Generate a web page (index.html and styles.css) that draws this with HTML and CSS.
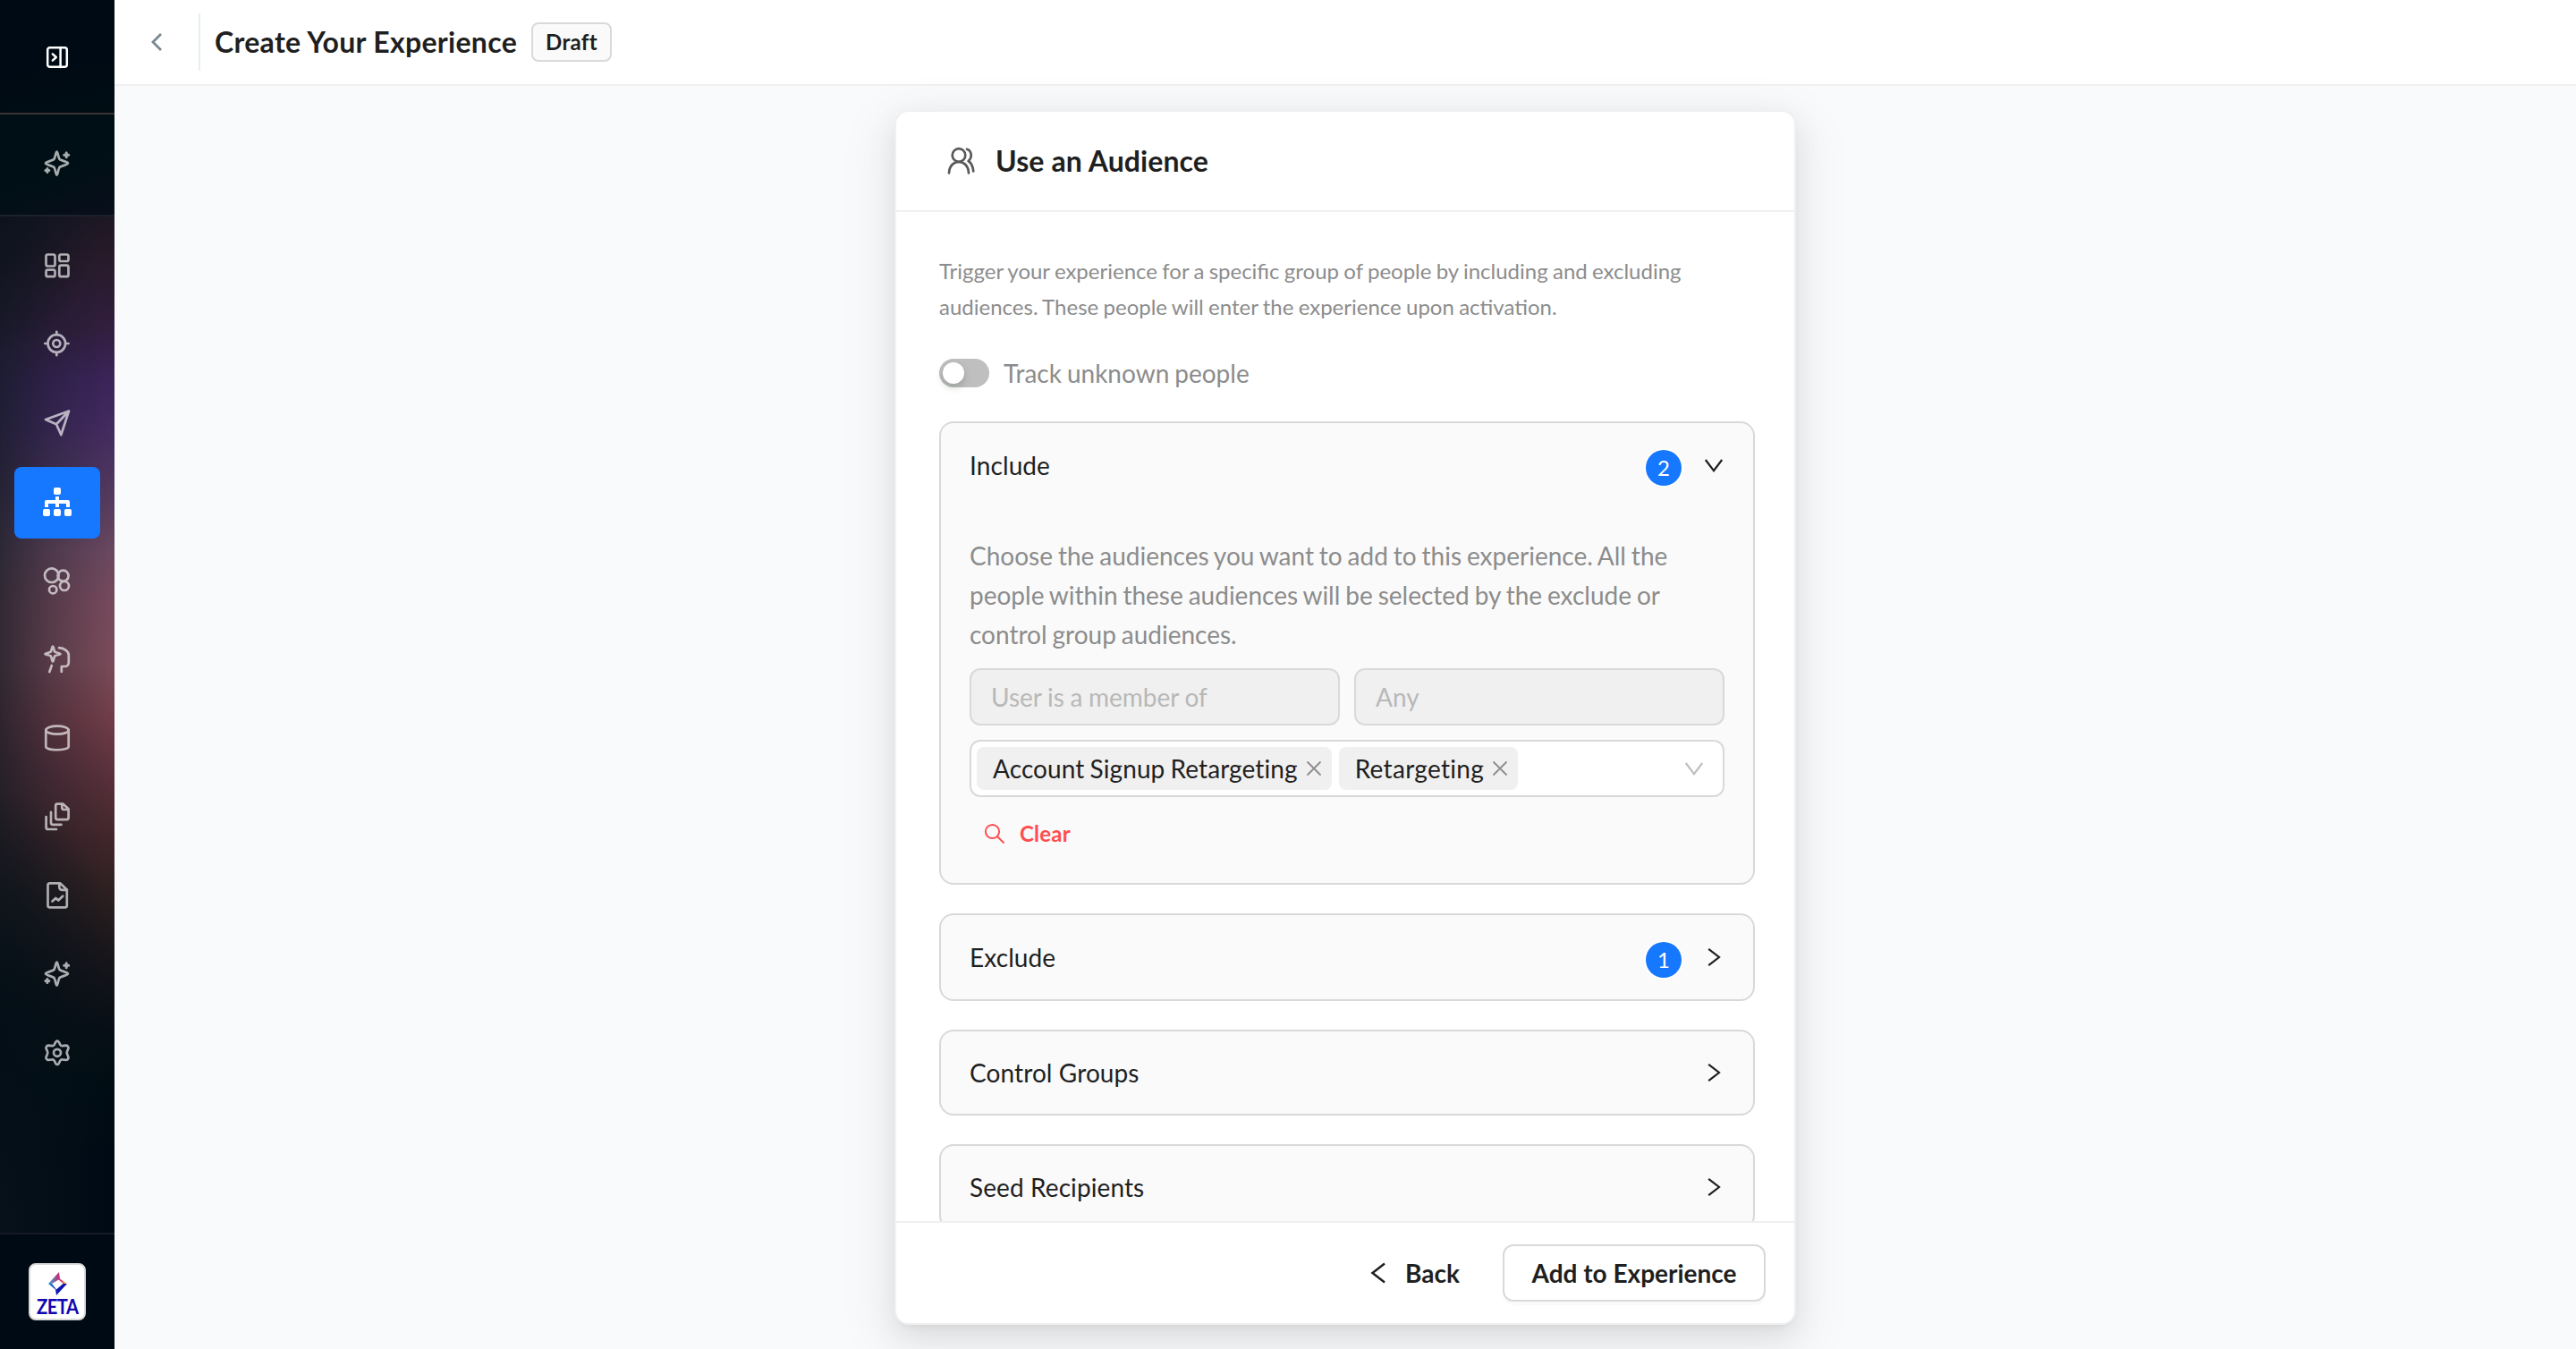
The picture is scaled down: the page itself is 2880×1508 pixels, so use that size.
FILE: index.html
```html
<!DOCTYPE html>
<html lang="en">
<head>
<meta charset="utf-8">
<title>Create Your Experience</title>
<link rel="stylesheet" href="styles.css">
</head>
<body>
<svg class="defs" width="0" height="0" aria-hidden="true">
  <symbol id="sparkle" viewBox="0 0 32 32">
    <path d="M15.500 2.500c1 0 1.300 5 3 8.500 3.500 2 9.500 3 9.500 4.500s-6 2.500-9.500 4.500c-1.700 3.500-2 8.500-3 8.500s-1.300-5-3-8.500C9 18 3 17 3 15.500s6-2.500 9.500-4.500c1.700-3.500 2-8.500 3-8.500z"/>
    <path d="M26.200 3.800v5M23.700 6.300h5M4.900 21.500v4M2.900 23.500h4" stroke-width="3"/>
  </symbol>
  <symbol id="down" viewBox="0 0 24 24"><path d="M2.800 6L12 18.200 21.200 6"/></symbol>
  <symbol id="right" viewBox="0 0 24 24"><path d="M6.200 2.800L18 12 6.200 21.200"/></symbol>
  <symbol id="close" viewBox="0 0 20 20"><path d="M3 3l14 14M17 3L3 17"/></symbol>
</svg>
<div class="app">
  <aside class="sidebar">
    <div class="side-toggle">
      <svg class="ico bright" viewBox="0 0 32 32"><rect x="5.200" y="5.200" width="21.600" height="21.600" rx="2.500"/><path d="M19.600 5v22M10.800 12.300l4 3.700-4 3.700"/></svg>
    </div>
    <div class="side-ai"><svg class="ico"><use href="#sparkle"/></svg></div>
    <nav class="side-nav">
      <a class="nav-item"><svg class="ico" viewBox="0 0 32 32"><rect x="3.500" y="3.500" width="10" height="13" rx="2"/><rect x="18.300" y="3.500" width="10.200" height="7.500" rx="2"/><rect x="3.500" y="20.700" width="10" height="7.500" rx="2"/><rect x="18.300" y="15.700" width="10.200" height="12.500" rx="2"/></svg></a>
      <a class="nav-item"><svg class="ico" viewBox="0 0 32 32"><circle cx="15.300" cy="15" r="9.800"/><circle cx="15.300" cy="15" r="4"/><path d="M15.300 1.800V5M15.300 25v3.200M2.200 15h3M25.500 15h3"/></svg></a>
      <a class="nav-item"><svg class="ico" viewBox="0 0 32 32"><path d="M29 2.500L3 12l12 5.200L20.300 29z M29 2.500L15 17.200"/></svg></a>
      <a class="nav-item active"><svg class="ico solid" viewBox="0 0 32 32"><rect x="12" y="0" width="8" height="8" rx="2"/><rect x="0" y="24" width="8" height="8" rx="2"/><rect x="12" y="24" width="8" height="8" rx="2"/><rect x="24" y="24" width="8" height="8" rx="2"/><path d="M14 10h4v4h10a2 2 0 0 1 2 2v6h-4v-4h-8v4h-4v-4H6v4H2v-6a2 2 0 0 1 2-2h10z"/></svg></a>
      <a class="nav-item"><svg class="ico" viewBox="0 0 32 32"><circle cx="9.800" cy="10.200" r="7.800"/><circle cx="22.600" cy="10.700" r="6"/><circle cx="24" cy="22" r="5"/><circle cx="11.200" cy="26.200" r="4.200"/></svg></a>
      <a class="nav-item"><svg class="ico" viewBox="0 0 32 32"><path d="M11 1.500c.9 0 1 4 2.300 6.200 2.200 1.300 6.200 1.400 6.200 2.300s-4 1-6.200 2.300C12 14.500 11.900 18.500 11 18.500s-1-4-2.300-6.200C6.500 11 2.500 10.900 2.500 10s4-1 6.200-2.300C10 5.500 10.100 1.500 11 1.500zM18 3.200c6 .3 10.800 4 10.800 8v8.500c0 2.500-2 4.300-4.300 4.300H20.800v6M9.800 23L7.300 30"/></svg></a>
      <a class="nav-item"><svg class="ico" viewBox="0 0 32 32"><ellipse cx="16" cy="7.200" rx="12.700" ry="4.500"/><path d="M3.300 7.200v18.300c0 5 25.400 5 25.400 0V7.200"/></svg></a>
      <a class="nav-item"><svg class="ico" viewBox="0 0 32 32"><path d="M16.200 1.700h6.300l6.100 5.600v9.800a2 2 0 0 1-2 2H16.200a2 2 0 0 1-2-2V3.700a2 2 0 0 1 2-2zM21.300 1.700v4a2.300 2.300 0 0 0 2.300 2.300h4.700M9 10.800v12a2 2 0 0 0 2 2h9.500M3.600 16v12a2 2 0 0 0 2 2H15"/></svg></a>
      <a class="nav-item"><svg class="ico" viewBox="0 0 32 32"><path d="M7.500 2.300h11.600l7.700 7.200V27.300a2 2 0 0 1-2 2H7.500a2 2 0 0 1-2-2V4.300a2 2 0 0 1 2-2zM18.300 2.300v4.500a3 3 0 0 0 3 3H27M10.500 22.500l3.800-3.500 2.900 2.500 5-4.800"/></svg></a>
      <a class="nav-item"><svg class="ico"><use href="#sparkle"/></svg></a>
      <a class="nav-item"><svg class="ico" viewBox="0 0 32 32"><circle cx="16" cy="15.800" r="4"/><path transform="translate(0 .6)" d="M14.200 3.300q1.800-2.600 3.600 0l1.500 3q.8 1.400 2.600 1.200l3.600-.4q3.200.1 3 3.200l-1.400 3.200q-.7 1.700 0 3.400l1.400 3.200q.2 3.100-3 3.200l-3.600-.4q-1.800-.2-2.600 1.200l-1.500 3q-1.800 2.600-3.600 0l-1.500-3q-.8-1.400-2.600-1.200l-3.600.4q-3.200-.1-3-3.200l1.400-3.200q.7-1.700 0-3.400L3.500 10.300q-.2-3.100 3-3.200l3.600.4q1.800.2 2.600-1.200z"/></svg></a>
    </nav>
    <div class="side-brand">
      <div class="brand">
        <svg class="brand-mark" viewBox="0 0 21 26">
          <defs>
            <linearGradient id="top" x1="0" y1="0" x2="1" y2="0"><stop offset="0" stop-color="#35a8e0"/><stop offset=".55" stop-color="#c0307a"/><stop offset=".72" stop-color="#e0506a"/><stop offset="1" stop-color="#ffe45a"/></linearGradient>
            <linearGradient id="bottom" x1="0" y1="0" x2="1" y2="0"><stop offset="0" stop-color="#1a9ae0"/><stop offset=".45" stop-color="#0a18b8"/><stop offset="1" stop-color="#1208b0"/></linearGradient>
          </defs>
          <path fill="url(#top)" d="M0 13L12 0l1 7.500L21 13h-4.500l-5-4.500L4 13z"/>
          <path fill="url(#bottom)" d="M0 13h4l5 6.500L16.500 13H21L9 26 8 19.500z"/>
        </svg>
        <span class="brand-name">ZETA</span>
      </div>
    </div>
  </aside>

  <div class="main">
    <header class="topbar">
      <div class="back-link"><svg viewBox="0 0 16 24"><path d="M13 3L4 12l9 9"/></svg></div>
      <h1 class="page-title">Create Your Experience</h1>
      <span class="status">Draft</span>
    </header>

    <main class="canvas">
      <section class="card">
        <div class="card-head">
          <svg class="people" viewBox="0 0 32 32"><circle cx="13" cy="9.500" r="7.300"/><path d="M2 29.500C2.300 21.500 7 17 13 17s10.700 4.500 11 12.500M22 2.800c6 2 6 9.600 1.600 13.200 3.400 2 5.100 6 5.700 11.500"/></svg>
          <h2 class="card-title">Use an Audience</h2>
        </div>
        <div class="card-body">
          <p class="intro">Trigger your experience for a specific group of people by including and excluding audiences. These people will enter the experience upon activation.</p>
          <div class="track"><span class="switch"><span class="knob"></span></span><span>Track unknown people</span></div>
          <div class="panels">
            <div class="panel">
              <div class="panel-head counted"><span class="panel-name">Include</span><span class="count">2</span><svg class="chev"><use href="#down"/></svg></div>
              <div class="panel-body">
                <p class="hint">Choose the audiences you want to add to this experience. All the people within these audiences will be selected by the exclude or control group audiences.</p>
                <div class="field-row"><div class="field">User is a member of</div><div class="field">Any</div></div>
                <div class="select">
                  <span class="tag">Account Signup Retargeting<svg class="x"><use href="#close"/></svg></span>
                  <span class="tag">Retargeting<svg class="x"><use href="#close"/></svg></span>
                  <svg class="chev faint"><use href="#down"/></svg>
                </div>
                <div class="clear"><svg viewBox="0 0 24 24"><circle cx="9.500" cy="9.500" r="7.600"/><path d="M15 15l7.500 7.500"/></svg><span>Clear</span></div>
              </div>
            </div>
            <div class="panel"><div class="panel-head counted"><span class="panel-name">Exclude</span><span class="count">1</span><svg class="chev"><use href="#right"/></svg></div></div>
            <div class="panel"><div class="panel-head"><span class="panel-name">Control Groups</span><svg class="chev"><use href="#right"/></svg></div></div>
            <div class="panel"><div class="panel-head"><span class="panel-name">Seed Recipients</span><svg class="chev"><use href="#right"/></svg></div></div>
          </div>
        </div>
        <div class="card-foot">
          <div class="btn-text"><svg viewBox="0 0 28 28"><path d="M21 3.500L7.500 14 21 24.500"/></svg><span>Back</span></div>
          <div class="btn">Add to Experience</div>
        </div>
      </section>
    </main>
  </div>
</div>
</body>
</html>
```

FILE: styles.css
```css
* { box-sizing: border-box; }
body { margin: 0; font-family: Lato, "Open Sans", sans-serif; font-size: 28px; line-height: 44px; color: #1f1f1f; }
h1, h2, p { margin: 0; }
svg { display: block; flex: none; fill: none; stroke: currentColor; stroke-linecap: round; stroke-linejoin: round; }
.defs { position: absolute; }
.app { display: flex; width: 2880px; height: 1508px; overflow: hidden; }

/* sidebar */
.sidebar { display: flex; flex-direction: column; width: 128px; flex: none; background: #000a14; }
.side-toggle { height: 128px; display: flex; align-items: center; justify-content: center; padding-top: 2px; border-bottom: 2px solid #383233; background: linear-gradient(170deg, #000a14 55%, #000e14); }
.side-ai { height: 114px; display: flex; align-items: center; justify-content: center; padding-bottom: 3px; border-bottom: 2px solid #1b212c; background: linear-gradient(160deg, #000f15 55%, #090f1b); }
.side-nav {
  flex: 1; display: flex; flex-direction: column; gap: 8px; padding: 16px;
  background:
    radial-gradient(110px 150px at 0 0, rgba(8,15,26,.6), rgba(8,15,26,0)),
    radial-gradient(150px 280px at 0 920px, rgba(0,12,20,.8), rgba(0,12,20,0)),
    linear-gradient(90deg, rgba(14,24,32,.66), rgba(14,24,32,.3) 45%, rgba(14,24,32,0) 95%),
    linear-gradient(180deg, #1d1724 0, #281a2a 4%, #321e3e 11%, #3b2459 16%, #432a60 21%, #50385d 27%, #69475f 33%, #75495b 38%, #784a58 44%, #6e3c48 49.5%, #58303b 55%, #42262b 61%, #2b1f20 67%, #17151a 74%, #080f16 80%, #000d13 85%, #000a14 92%);
}
.nav-item { height: 80px; display: flex; align-items: center; justify-content: center; border-radius: 8px; padding-bottom: 2px; }
.nav-item.active { background: #1677ff; padding-bottom: 2px; }
.ico { width: 32px; height: 32px; stroke: #fff; stroke-width: 2.700; opacity: .65; }
.ico.bright { opacity: 1; stroke-width: 2.500; }
.ico.solid { opacity: 1; fill: #fff; stroke: none; }
.side-brand { height: 130px; display: flex; align-items: center; justify-content: center; border-top: 2px solid #151c26; }
.brand { width: 64px; height: 64px; border: 2px solid #d9d9d9; border-radius: 8px; background: #fff; display: flex; flex-direction: column; align-items: center; padding-top: 8px; }
.brand-mark { width: 21px; height: 26px; stroke: none; }
.brand-name { font-family: Lato, sans-serif; font-weight: 700; font-size: 22px; line-height: 25px; letter-spacing: -.6px; color: #1208b0; transform: scaleX(.92); }

/* top bar */
.main { flex: 1; display: flex; flex-direction: column; min-width: 0; }
.topbar { height: 96px; flex: none; display: flex; align-items: center; border-bottom: 2px solid #f0f0f0; background: #fff; }
.back-link { width: 96px; height: 64px; border-right: 2px solid #e8eff2; display: flex; align-items: center; padding-left: 39px; color: #78898f; }
.back-link svg { width: 16px; height: 24px; stroke-width: 2.800; stroke-linecap: butt; stroke-linejoin: miter; }
.page-title { width: 338px; margin-left: 16px; font-size: 32px; font-weight: 700; letter-spacing: .3px; white-space: nowrap; }
.status { width: 90px; margin-left: 16px; height: 44px; border: 2px solid #d9d9d9; border-radius: 8px; background: #fafafa; font-size: 24px; font-weight: 700; line-height: 40px; text-align: center; letter-spacing: .3px; }

/* card */
.canvas { flex: 1; min-height: 0; padding: 27px 0 27px 872px; background: #f8fafc; }
.card { width: 1008px; height: 1358px; display: flex; flex-direction: column; border: 2px solid #f0f0f0; border-radius: 16px; background: #fff; box-shadow: 0 12px 32px rgba(0,0,0,.08), 0 6px 12px -8px rgba(0,0,0,.12), 0 18px 56px 16px rgba(0,0,0,.05); }
.card-head { height: 112px; flex: none; display: flex; align-items: center; padding: 0 57px; border-bottom: 2px solid #f0f0f0; }
.people { width: 32px; height: 32px; stroke-width: 2.700; color: #595959; }
.card-title { margin-left: 22px; font-size: 32px; font-weight: 700; letter-spacing: .1px; }
.card-body { flex: 1; min-height: 0; overflow: hidden; padding: 46px 44px 0 48px; }
.intro { font-size: 24px; line-height: 40px; color: #8c8c8c; width: 860px; word-spacing: -.85px; }
.track { display: flex; align-items: center; gap: 16px; margin: 32px 0; height: 44px; color: #8c8c8c; word-spacing: -1.200px; }
.switch { width: 56px; height: 32px; padding: 4px; border-radius: 16px; background: #bfbfbf; }
.knob { display: block; width: 24px; height: 24px; border-radius: 50%; background: #fff; box-shadow: 0 4px 8px rgba(0,35,11,.2); }
.panels { display: flex; flex-direction: column; gap: 32px; }
.panel { border: 2px solid #d9d9d9; border-radius: 16px; background: #fafafa; }
.panel-head { height: 92px; display: flex; align-items: center; padding: 0 32px; }
.panel-head.counted { height: 94px; }
.panel-name { flex: 1; letter-spacing: .1px; }
.count { width: 40px; height: 40px; margin: 5px 24px 0 0; border-radius: 50%; background: #1677ff; box-shadow: 0 0 0 2px #fff; color: #fff; font-size: 24px; line-height: 40px; text-align: center; }
.chev { width: 24px; height: 24px; stroke-width: 2.200; stroke-linecap: butt; stroke-linejoin: miter; }
.chev.faint { color: #bfbfbf; margin-left: auto; margin-right: 20px; }
.panel-body { display: flex; flex-direction: column; gap: 16px; padding: 32px; }
.hint { color: #8c8c8c; width: 800px; word-spacing: -1.250px; }
.field-row { display: grid; grid-template-columns: 1fr 1fr; gap: 16px; }
.field { height: 64px; padding: 8px 22px; border: 2px solid #d9d9d9; border-radius: 12px; background: #f0f0f0; color: #b8b8b8; word-spacing: -.6px; }
.select { height: 64px; display: flex; align-items: center; gap: 8px; padding: 0 0 0 6px; border: 2px solid #d9d9d9; border-radius: 12px; background: #fff; }
.tag { height: 48px; display: flex; align-items: center; gap: 8px; padding: 0 10px 0 18px; border-radius: 8px; background: #f0f0f0; line-height: 48px; letter-spacing: .1px; word-spacing: -1.200px; }
.tag + .tag { letter-spacing: .3px; }
.x { width: 20px; height: 20px; stroke-width: 1.800; color: #8c8c8c; }
.clear { height: 48px; display: flex; align-items: center; gap: 16px; padding: 1px 0 0 16px; color: #ff4d4f; font-size: 24px; font-weight: 700; letter-spacing: .2px; }
.clear svg { width: 24px; height: 24px; stroke-width: 2; stroke-linecap: butt; }
.card-foot { height: 114px; flex: none; display: flex; align-items: center; justify-content: flex-end; padding: 0 32px; border-top: 2px solid #f0f0f0; font-weight: 700; }
.btn-text { display: flex; align-items: center; gap: 16px; margin-right: 48px; }
.btn-text svg { width: 28px; height: 28px; stroke-width: 2.500; stroke-linecap: butt; stroke-linejoin: miter; }
.btn { width: 294px; height: 64px; border: 2px solid #d9d9d9; border-radius: 12px; text-align: center; line-height: 60px; background: #fff; box-shadow: 0 4px 0 rgba(0,0,0,.02); }
```
